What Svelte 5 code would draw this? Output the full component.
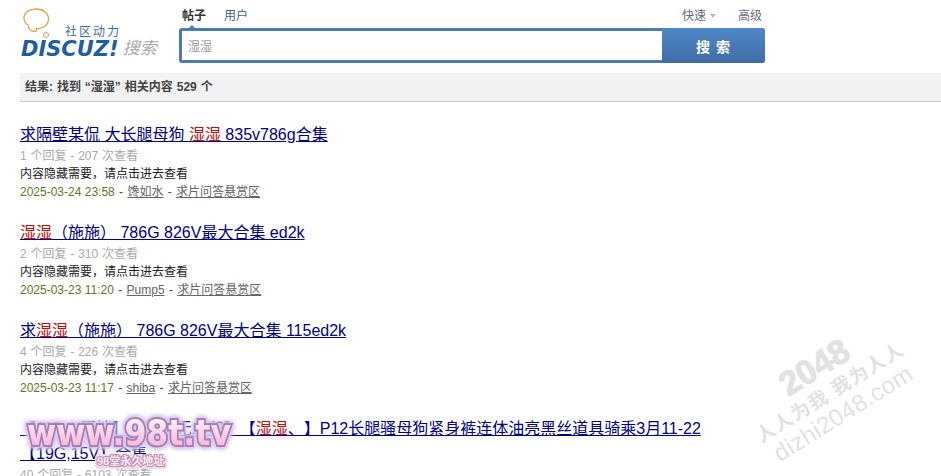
<script>
  const results = [
    {
      before: "求隔壁某侃 大长腿母狗 ",
      hit: "湿湿",
      after: " 835v786g合集",
      stats: "1 个回复 - 207 次查看",
      date: "2025-03-24 23:58",
      author: "馋如水",
    },
    {
      before: "",
      hit: "湿湿",
      after: "（施施） 786G 826V最大合集 ed2k",
      stats: "2 个回复 - 310 次查看",
      date: "2025-03-23 11:20",
      author: "Pump5",
    },
    {
      before: "求",
      hit: "湿湿",
      after: "（施施） 786G 826V最大合集 115ed2k",
      stats: "4 个回复 - 226 次查看",
      date: "2025-03-23 11:17",
      author: "shiba",
    },
    {
      before: "【115+, 原档】【网红无水印】【",
      hit: "湿湿",
      after: "、】P12长腿骚母狗紧身裤连体油亮黑丝道具骑乘3月11-22【19G,15V】合集",
      stats: "40 个回复 - 6103 次查看",
      date: "2025-03-22 10:02",
      author: "shiba",
    },
  ];
</script>

<div class="page">
  <header class="head">
    <div class="logo">
      <svg class="bubble" width="30" height="32" viewBox="0 0 30 32">
        <path
          d="M13 1C6 1 1 4.500 1 10c0 3.500 1.500 5.500 4 7 .5 3 2.500 6 6 6.500 2 .2 3-1 2.500-3 6.500.5 12-3.500 12-9.500C25.500 5 20 1 13 1Z"
          fill="#fff"
          stroke="#e0a04c"
          stroke-width="1.300"
        />
        <circle cx="23" cy="27" r="2.500" fill="#fff" stroke="#d9a05a" stroke-width="1" />
      </svg>
      <span class="slogan">社区动力</span>
      <div class="brand"><b>DISCUZ!</b><i>搜索</i></div>
    </div>
    <div class="search">
      <div class="tabs">
        <nav>
          <span class="on">帖子</span>
          <span>用户</span>
        </nav>
        <nav class="right">
          <span>快速<em></em></span>
          <span>高级</span>
        </nav>
      </div>
      <form class="box">
        <input type="text" value="湿湿" />
        <button type="button">搜 索</button>
      </form>
    </div>
  </header>

  <div class="summary">结果: 找到 “湿湿” 相关内容 529 个</div>

  <ul class="list">
    {#each results as item}
      <li>
        <h3>{item.before}<strong>{item.hit}</strong>{item.after}</h3>
        <p class="stats">{item.stats}</p>
        <p>内容隐藏需要，请点击进去查看</p>
        <p class="meta">
          <span class="date">{item.date}</span> -
          <a href="#top">{item.author}</a> -
          <a href="#top">求片问答悬赏区</a>
        </p>
      </li>
    {/each}
  </ul>

  <svg class="mark98" width="230" height="60" viewBox="0 0 230 60">
    <defs>
      <linearGradient id="pink" x1="0" y1="0" x2="0" y2="1">
        <stop offset="0" stop-color="#fff" />
        <stop offset="1" stop-color="#f7a8d2" />
      </linearGradient>
    </defs>
    <text class="site" x="7" y="33" textLength="204" lengthAdjust="spacingAndGlyphs" fill="url(#pink)">www.98t.tv</text>
    <rect x="75" y="42" width="72" height="15" rx="4" fill="#f0dcea" />
    <text class="sub" x="77" y="53">98堂永久地址</text>
  </svg>

  <div class="mark2048">
    <span class="num">2048</span>
    <span class="motto">人人为我 我为人人</span>
    <span class="url">dizhi2048.com</span>
  </div>
</div>

<style>
  :global(body) {
    background: #fff;
    overflow: hidden;
  }

  .page {
    position: relative;
    height: 476px;
    overflow: hidden;
    font: 12px/18px "Liberation Sans", "Noto Sans CJK SC", sans-serif;
    color: #444;
  }

  .head {
    display: flex;
    height: 73px;
    padding-left: 20px;
  }

  .logo {
    position: relative;
    width: 159px;
  }

  .bubble {
    position: absolute;
    left: 3px;
    top: 8px;
  }

  .slogan {
    position: absolute;
    left: 45px;
    top: 23px;
    font-size: 12px;
    letter-spacing: 2px;
    color: #3a6ea5;
  }

  .brand {
    position: absolute;
    left: 1px;
    top: 37px;
    display: flex;
    align-items: center;
    white-space: nowrap;
  }

  .brand b {
    font: italic 700 21px/24px "DejaVu Sans", sans-serif;
    color: #1f5f9f;
  }

  .brand i {
    margin-left: 4px;
    font-size: 17px;
    color: #aaa;
  }

  .search {
    position: relative;
    width: 586px;
  }

  .tabs {
    display: flex;
    justify-content: space-between;
    height: 28px;
    padding: 7px 3px 0 3px;
    box-sizing: border-box;
  }

  /* little notch under the active tab */
  .tabs::after {
    content: "";
    position: absolute;
    left: 10px;
    top: 25px;
    border: 3px solid transparent;
    border-top: 0;
    border-bottom-color: #4b7bb0;
  }

  .tabs nav {
    display: flex;
    gap: 18px;
  }

  .tabs span {
    color: #40648a;
    font-size: 12px;
  }

  .tabs .on {
    color: #333;
    font-weight: 700;
  }

  .tabs .right {
    gap: 22px;
  }

  .tabs .right span {
    color: #5f6e7c;
  }

  .tabs em {
    display: inline-block;
    margin-left: 4px;
    border: 3.500px solid transparent;
    border-top: 4px solid #bbb;
    border-bottom: 0;
    vertical-align: 2px;
  }

  .box {
    display: flex;
    height: 35px;
    background: #4b7bb0;
    border-radius: 3px;
    box-sizing: border-box;
    padding: 3px 0 3px 3px;
  }

  .box input {
    width: 480px;
    height: 29px;
    padding: 0 6px;
    border: 0;
    outline: 0;
    box-sizing: border-box;
    background: #fff;
    font: 12px "Liberation Sans", "Noto Sans CJK SC", sans-serif;
    color: #999;
  }

  .box button {
    flex: 1;
    margin: -3px 0;
    border: 0;
    border-radius: 0 3px 3px 0;
    background: linear-gradient(#5089c8, #3f6ca5);
    color: #fff;
    font: 700 14px "Liberation Sans", "Noto Sans CJK SC", sans-serif;
    letter-spacing: 1px;
  }

  .summary {
    margin-left: 20px;
    height: 28px;
    padding-left: 5px;
    background: #f2f2f2;
    border-bottom: 1px solid #cdcdcd;
    font-weight: 700;
    line-height: 28px;
    word-spacing: 0.6px;
    color: #444;
  }

  .list {
    list-style: none;
    margin: 0;
    padding: 20px 0 0 20px;
    width: 685px;
  }

  .list li {
    margin-bottom: 19px;
  }

  .list h3 {
    margin: 0;
    font-size: 16px;
    font-weight: 400;
    line-height: 25px;
    color: #00008b;
    text-decoration: underline;
    text-spacing-trim: space-all;
  }

  .list strong {
    font-weight: 400;
    color: #c01010;
  }

  .list p {
    margin: 0;
    color: #222;
  }

  .list p.stats {
    color: #aaa;
    word-spacing: 0.5px;
  }

  .list p.meta {
    color: #444;
    word-spacing: 1px;
  }

  .date {
    color: #5b7a28;
    word-spacing: 0;
  }

  .list a {
    color: #666;
  }

  .mark98 {
    position: absolute;
    left: 20px;
    top: 412px;
    pointer-events: none;
  }

  .site {
    font: 700 36px "DejaVu Sans", sans-serif;
    stroke: #a87fb4;
    stroke-width: 4px;
    paint-order: stroke fill;
    filter: drop-shadow(0 0 2px #d8c8f0) drop-shadow(0 0 2px #d8c8f0) drop-shadow(0 0 1px #d8c8f0);
  }

  .sub {
    font: 700 11px "Liberation Sans", "Noto Sans CJK SC", sans-serif;
    fill: #fdeef6;
    stroke: #c08ab0;
    stroke-width: 2px;
    paint-order: stroke fill;
  }

  .mark2048 {
    position: absolute;
    left: 717px;
    top: 346px;
    width: 220px;
    display: flex;
    flex-direction: column;
    align-items: center;
    transform: rotate(-32deg);
    color: #e2e2e2;
    white-space: nowrap;
    pointer-events: none;
  }

  .num {
    font: 900 34px/34px "Liberation Sans", sans-serif;
    -webkit-text-stroke: 1px #e2e2e2;
  }

  .motto {
    font-size: 19px;
    line-height: 27px;
    font-weight: 700;
    letter-spacing: 1.500px;
  }

  .url {
    font-size: 24px;
    line-height: 22px;
    letter-spacing: 0.3px;
  }
</style>
